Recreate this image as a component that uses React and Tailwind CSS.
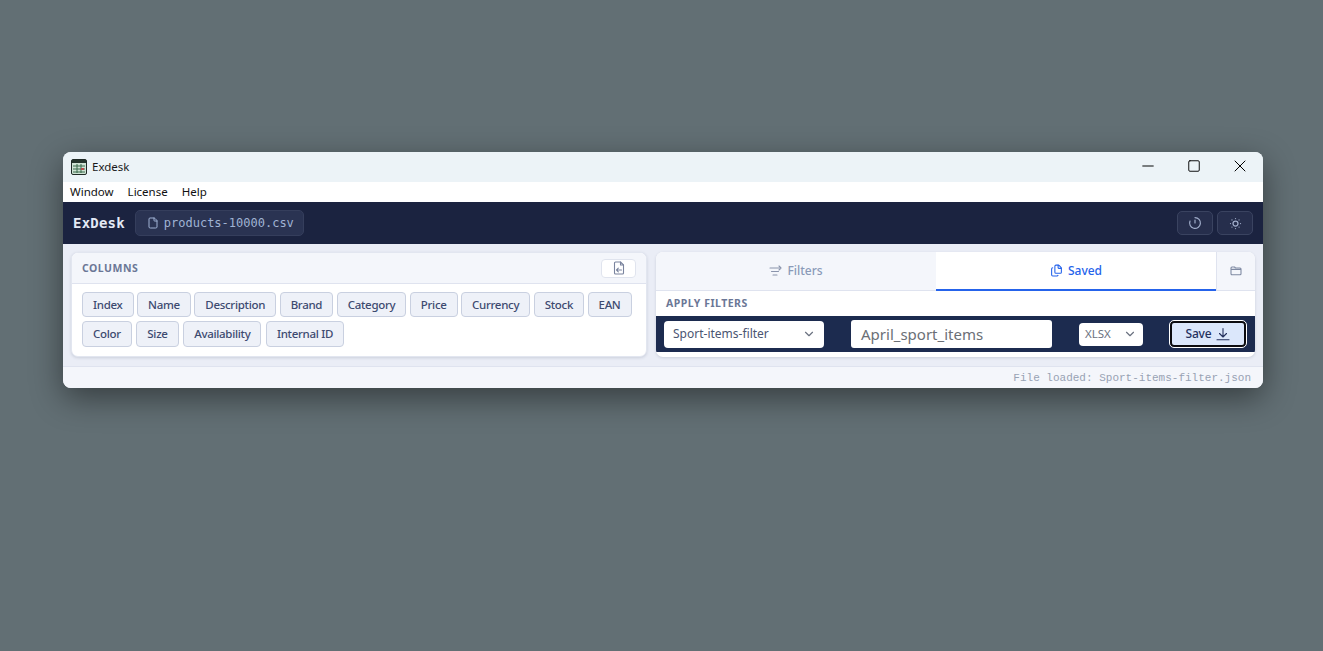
import { File, SunDim, ChevronDown, Files, Minus, Square, X } from 'lucide-react'

const row1 = ['Index', 'Name', 'Description', 'Brand', 'Category', 'Price', 'Currency', 'Stock', 'EAN']
const row2 = ['Color', 'Size', 'Availability', 'Internal ID']

function Tag({ label }) {
  return (
    <span className="h-full px-[10px] flex items-center rounded-[4px] border border-[#c9d0e0] bg-[#eef1f8] text-[11.5px] tracking-[-0.3px] font-medium text-[#3d4a70]">
      {label}
    </span>
  )
}

function AppIcon() {
  return (
    <svg width="16" height="16" viewBox="0 0 16 16">
      <rect x="0.5" y="0.5" width="15" height="15" rx="1.5" fill="#cfe3d4" stroke="#1f2a26" />
      <rect x="1" y="1" width="14" height="3" fill="#25352c" />
      <path d="M2 7h12M2 10h12M2 13h12M6 5v9M10 5v9" stroke="#3b6b4c" strokeWidth="1" />
      <rect x="10" y="9" width="3" height="2" fill="#b84a4a" />
    </svg>
  )
}

function HistoryIcon() {
  return (
    <svg width="14" height="14" viewBox="0 0 14 14" fill="none" stroke="currentColor" strokeWidth="1.2" strokeLinecap="round">
      <path d="M7 1.6a5.4 5.4 0 1 1-5 3.4" />
      <path d="M7 4v3" />
    </svg>
  )
}

function FilterIcon() {
  return (
    <svg width="13" height="12" viewBox="0 0 13 12" fill="none" stroke="currentColor" strokeWidth="1.1" strokeLinecap="round" strokeLinejoin="round">
      <path d="M1 3h10M2.5 6.5h7M4 10h4" />
      <path d="M10 1l2 2-2 2" />
    </svg>
  )
}

function ImportIcon() {
  return (
    <svg width="12" height="14" viewBox="0 0 12 14" fill="none" stroke="currentColor" strokeWidth="1.1" strokeLinecap="round" strokeLinejoin="round">
      <path d="M7.5 1H2.5a1 1 0 0 0-1 1v10a1 1 0 0 0 1 1h7a1 1 0 0 0 1-1V4z" />
      <path d="M7.5 1v3h3" />
      <path d="M8.5 9H3.5M5.3 7.2L3.5 9l1.8 1.8" />
    </svg>
  )
}

function FolderIcon() {
  return (
    <svg width="12" height="10" viewBox="0 0 12 10" fill="none" stroke="currentColor" strokeWidth="1.1" strokeLinejoin="round">
      <path d="M1 2a1 1 0 0 1 1-1h2.5l1 1H10a1 1 0 0 1 1 1v4.8a1 1 0 0 1-1 1H2a1 1 0 0 1-1-1z" />
      <path d="M1 3.4h10" />
    </svg>
  )
}

function SaveIcon() {
  return (
    <svg width="14" height="14" viewBox="0 0 14 14" fill="none" stroke="currentColor" strokeWidth="1.1" strokeLinecap="round" strokeLinejoin="round">
      <path d="M7 1.5v8M3.5 6.5L7 10l3.5-3.5" />
      <path d="M1 12.8h12" />
    </svg>
  )
}

export default function App() {
  return (
    <div className="min-h-[651px] bg-[#626f74] pt-[152px] px-[60px] overflow-hidden" style={{ fontFamily: '"Noto Sans", sans-serif' }}>
      <div className="w-[1200px] ml-[3px] rounded-[8px] overflow-hidden bg-[#f4f6fb] shadow-[0_10px_32px_rgba(0,0,0,0.45)]">
        {/* Title bar */}
        <div className="h-[30px] bg-[#ecf3f7] flex items-center pl-[8px]">
          <AppIcon />
          <span className="ml-[5px] text-[11.5px] text-[#1a1a1a]">Exdesk</span>
          <div className="ml-auto flex items-center pb-[2px] text-black">
            <div className="w-[46px] flex justify-center"><Minus size={18} strokeWidth={1.3} /></div>
            <div className="w-[46px] flex justify-center"><Square size={14} strokeWidth={1.6} /></div>
            <div className="w-[46px] flex justify-center"><X size={20} strokeWidth={1.2} /></div>
          </div>
        </div>

        {/* Menu */}
        <div className="h-[20px] bg-white flex items-center gap-[14px] pl-[7px] text-[11.5px] text-[#111]">
          <span>Window</span>
          <span>License</span>
          <span>Help</span>
        </div>

        {/* App header */}
        <div className="h-[42px] bg-[#1b2340] flex items-center px-[10px]">
          <span className="text-[14px] font-bold tracking-[0.2px] text-[#e3e9f5]" style={{ fontFamily: '"DejaVu Sans Mono", monospace' }}>ExDesk</span>
          <div className="ml-[10px] h-[26px] pl-[11px] pr-[9px] flex items-center gap-[5px] rounded-[5px] bg-[#2a3352] border border-[#353e5c] text-[#a0b3d4]">
            <File size={12} />
            <span className="text-[12px]" style={{ fontFamily: '"DejaVu Sans Mono", monospace' }}>products-10000.csv</span>
          </div>
          <div className="ml-auto flex gap-[4px]">
            <div className="w-[36px] h-[24px] flex items-center justify-center rounded-[5px] bg-[#262e4c] border border-[#3a4360] text-[#a0adca]">
              <HistoryIcon />
            </div>
            <div className="w-[36px] h-[24px] flex items-center justify-center rounded-[5px] bg-[#262e4c] border border-[#3a4360] text-[#a0adca]">
              <SunDim size={15} />
            </div>
          </div>
        </div>

        {/* Main */}
        <div className="h-[122px] bg-[#eaedf6] flex gap-[9px] pt-[8px] px-[8px]">
          <div className="w-[576px] h-[105px] rounded-[7px] bg-white border border-[#e2e6f0] shadow-[0_1px_3px_rgba(60,70,100,0.18)] overflow-hidden">
            <div className="h-[31px] bg-[#f4f6fb] border-b border-[#dfe3ef] flex items-center px-[10px]">
              <span className="pt-[1px] text-[10.5px] font-bold tracking-[0.5px] text-[#6b7796]">COLUMNS</span>
              <div className="ml-auto w-[35px] h-[19px] rounded-[4px] bg-white border border-[#e0e4ee] flex items-center justify-center text-[#7a849e]">
                <ImportIcon />
              </div>
            </div>
            <div className="pt-[8px] pl-[10px] flex flex-col gap-[4px]">
              <div className="h-[25px] flex gap-[3.5px]">{row1.map(t => <Tag key={t} label={t} />)}</div>
              <div className="h-[26px] flex gap-[4.5px]">{row2.map(t => <Tag key={t} label={t} />)}</div>
            </div>
          </div>

          <div className="w-[599px] h-[105px] rounded-[7px] bg-white shadow-[0_1px_3px_rgba(60,70,100,0.18)] overflow-hidden">
            <div className="h-[39px] flex border-b border-[#dfe3ef]">
              <div className="w-[280px] pb-[1px] bg-[#f4f6fb] flex items-center justify-center gap-[5px] text-[12px] font-medium text-[#8a9ab8]">
                <span className="text-[#8a94ac]"><FilterIcon /></span>
                Filters
              </div>
              <div className="w-[280px] -mb-px bg-white border-b-2 border-[#2563eb] flex items-center justify-center gap-[5px] text-[12px] font-medium text-[#2563eb]">
                <Files size={13} />
                Saved
              </div>
              <div className="flex-1 bg-[#f4f6fb] border-l border-[#dfe3ef] flex items-center justify-center text-[#7f8aa3]">
                <FolderIcon />
              </div>
            </div>
            <div className="h-[25px] flex items-center pl-[10px]">
              <span className="text-[10.5px] font-bold tracking-[0.5px] text-[#6b7796]">APPLY FILTERS</span>
            </div>
            <div className="h-[36px] bg-[#1c2b4f] flex items-center pl-[8px]">
              <div className="w-[160px] h-[27px] rounded-[4px] bg-white flex items-center pl-[9px] pr-[8px] text-[12px] text-[#4a5572]">
                Sport-items-filter
                <ChevronDown size={14} className="ml-auto text-[#6b7280]" />
              </div>
              <div className="ml-[27px] w-[201px] h-[28px] rounded-[3px] bg-white flex items-center pl-[10px] text-[15px] text-[#6b6f76]">
                April_sport_items
              </div>
              <div className="ml-[27px] w-[64px] h-[23px] rounded-[4px] bg-white flex items-center pl-[6px] pr-[6px] text-[11.5px] text-[#6b7280]">
                XLSX
                <ChevronDown size={14} className="ml-auto" />
              </div>
              <div className="ml-[27px] w-[76px] h-[26px] rounded-[4px] bg-[#dbe7fb] border-2 border-[#0c0c10] outline outline-1 outline-white flex items-center justify-center gap-[5px] text-[12px] font-medium tracking-[-0.2px] text-[#24315e]">
                Save
                <SaveIcon />
              </div>
            </div>
          </div>
        </div>

        {/* Status bar */}
        <div className="h-[22px] pt-[1px] bg-[#f4f6fb] border-t border-[#dfe3ef] flex items-center justify-end pr-[12px]">
          <span className="text-[11px] text-[#98a2b4]" style={{ fontFamily: '"Liberation Mono", monospace' }}>File loaded: Sport-items-filter.json</span>
        </div>
      </div>
    </div>
  )
}
